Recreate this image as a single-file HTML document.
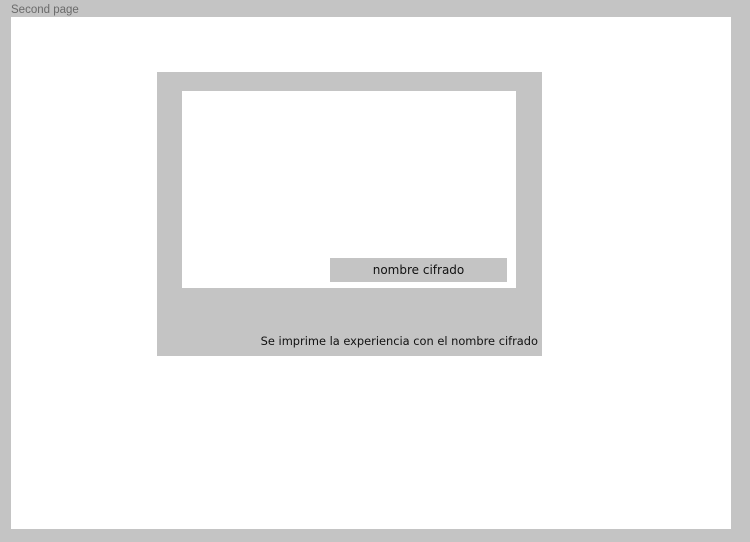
<!DOCTYPE html>
<html><head><style>
html,body{margin:0;padding:0;width:750px;height:542px;overflow:hidden;background:#c4c4c4;font-family:"Liberation Sans",sans-serif;}
.t{position:absolute;left:11px;top:4px;font-size:11.5px;color:#6b6b6b;}
.page{position:absolute;left:11px;top:17px;width:720px;height:512px;background:#fff;}
.box{position:absolute;left:157px;top:72px;width:385px;height:284px;background:#c4c4c4;}
.in{position:absolute;left:182px;top:91px;width:334px;height:197px;background:#fff;}
.btn{position:absolute;left:330px;top:258px;width:177px;height:24px;background:#c4c4c4;font-family:"DejaVu Sans",sans-serif;font-size:12px;line-height:24px;text-align:center;color:#111;}
.cap{position:absolute;right:212px;top:334px;font-family:"DejaVu Sans",sans-serif;font-size:11.4px;color:#111;white-space:nowrap;}
</style></head><body>
<div class="t">Second page</div>
<div class="page"></div>
<div class="box"></div>
<div class="in"></div>
<div class="btn">nombre cifrado</div>
<div class="cap">Se imprime la experiencia con el nombre cifrado</div>
</body></html>
